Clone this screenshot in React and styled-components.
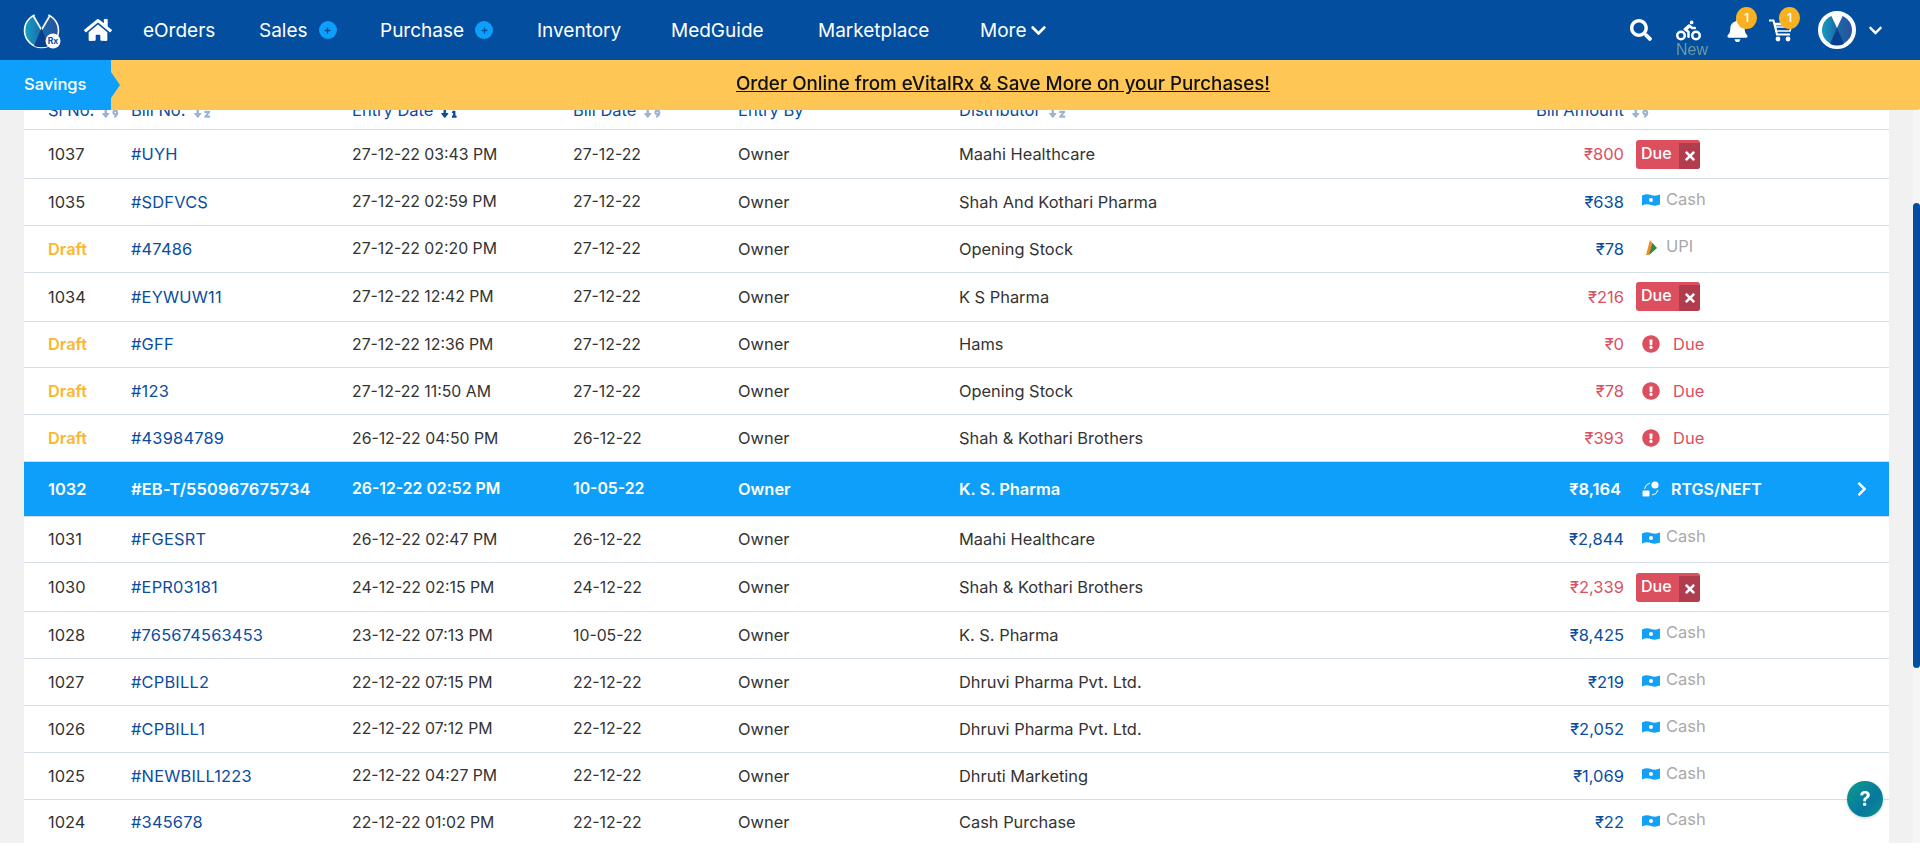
import React from 'react';
import styled, { createGlobalStyle, css } from 'styled-components';
import { FaHome, FaSearch, FaBiking, FaBell, FaChevronDown, FaChevronRight, FaTimes, FaExclamationCircle, FaSortNumericDown, FaSortNumericDownAlt, FaSortAlphaDown, FaPlus } from 'react-icons/fa';

const NAVY = '#044ea0';
const SKY = '#0d9ffa';
const RED = '#dc4f5f';
const LINK = '#0a4d9f';

const Global = createGlobalStyle`
  html, body { margin: 0; padding: 0; background: #fff; overflow: hidden; }
  body { font-family: Inter, "Liberation Sans", sans-serif; color: #333; }
  * { box-sizing: border-box; }
`;

const TopFixed = styled.header`
  position: fixed;
  top: 0;
  left: 0;
  right: 0;
  z-index: 5;
`;

const NavBar = styled.nav`
  height: 60px;
  background: ${NAVY};
  display: flex;
  align-items: center;
  padding-left: 23px;
  color: #fff;
`;

const LogoBox = styled.div`
  width: 61px;
  height: 37px;
  flex: none;
`;

const HomeLink = styled.div`
  width: 59px;
  display: flex;
  font-size: 28px;
  flex: none;
`;

const Menu = styled.div`
  display: grid;
  grid-template-columns: 116px 121px 157px 134px 147px 162px auto;
  align-items: center;
  font-size: 19px;
`;

const MenuItem = styled.span`
  display: flex;
  align-items: center;
  white-space: nowrap;
`;

const PlusBadge = styled.span`
  width: 18px;
  height: 18px;
  border-radius: 50%;
  background: ${SKY};
  color: ${NAVY};
  display: inline-flex;
  align-items: center;
  justify-content: center;
  font-size: 7px;
  margin-left: 11px;
`;

const MoreChevron = styled(FaChevronDown)`
  font-size: 17px;
  margin-left: 4px;
`;

const NavRight = styled.div`
  margin-left: auto;
  display: grid;
  grid-template-columns: 46px 50px 43px 49px 50px 52px;
  align-items: center;
  height: 60px;
`;

const IconSlot = styled.div`
  position: relative;
  display: flex;
  align-items: center;
  font-size: ${p => p.$size || 22}px;
`;

const NewLabel = styled.span`
  position: absolute;
  left: 0;
  top: 23px;
  font-size: 16px;
  line-height: 18px;
  color: #6f9a9a;
  font-family: "Liberation Sans", sans-serif;
`;

const CountBadge = styled.span`
  position: absolute;
  left: 10px;
  top: -12px;
  width: 21px;
  height: 22px;
  border-radius: 50%;
  background: #f9b021;
  color: #fff;
  font-size: 12px;
  font-weight: 600;
  display: flex;
  align-items: center;
  justify-content: center;
`;

const Banner = styled.div`
  height: 50px;
  background: #fec655;
  display: flex;
  align-items: center;
  border-bottom-right-radius: 3px;
`;

const SavingsTab = styled.div`
  width: 120px;
  height: 50px;
  flex: none;
  background: ${SKY};
  color: #fff;
  font-size: 16.5px;
  font-weight: 500;
  display: flex;
  align-items: center;
  padding: 0 0 2px 24px;
  clip-path: polygon(0 0, 111px 0, 111px 12px, 120px 25px, 111px 38px, 111px 50px, 0 50px);
`;

const BannerLink = styled.a`
  flex: 1;
  text-align: center;
  padding: 0 34px 3px 0;
  font-size: 18.8px;
  font-weight: 500;
  color: #111;
  text-decoration: underline;
`;

const Main = styled.main`
  height: 843px;
  background: #f1f1f1;
  padding: 90px 31px 0 24px;
  overflow: hidden;
`;

const Card = styled.section`
  background: #fff;
`;

const gridCols = css`
  display: grid;
  grid-template-columns: 83px 221px 221px 165px 221px 481px 184px 1fr;
  padding-left: 24px;
  align-items: center;
  border-bottom: 1px solid #d3deea;
`;

const HeadRow = styled.div`
  ${gridCols}
  height: 40px;
  font-size: 16.5px;
  color: ${LINK};
`;

const HeadCell = styled.div`
  display: flex;
  align-items: center;
  gap: 7px;
  white-space: nowrap;
  ${p => p.$amount && css`
    justify-content: flex-end;
    margin-right: -26px;
  `}
`;

const SortMark = styled.span`
  display: inline-flex;
  font-size: 19px;
  color: ${p => (p.$active ? LINK : '#9db4d0')};
`;

const Row = styled.div`
  ${gridCols}
  height: ${p => (p.$sel ? 54.6 : p.$button ? 49 : 46.8)}px;
  font-size: 16.4px;
  color: ${p => (p.$sel ? '#fff' : '#333')};
  background: ${p => (p.$sel ? SKY : 'transparent')};
  font-weight: ${p => (p.$sel ? 600 : 400)};
`;

const Serial = styled.div`
  ${p => p.$draft && css`
    color: #fdb62f;
    font-weight: 600;
  `}
`;

const BillNo = styled.div`
  color: ${p => (p.$sel ? '#fff' : LINK)};
  white-space: nowrap;
  letter-spacing: 0.2px;
`;

const Plain = styled.div`
  white-space: nowrap;
`;

const Stamp = styled.div`
  white-space: nowrap;
  font-size: 15.8px;
`;

const Amount = styled.div`
  text-align: right;
  font-size: 16.5px;
  color: ${p => (p.$sel ? '#fff' : p.$due ? RED : LINK)};
  padding-right: ${p => (p.$sel ? 3 : 0)}px;
`;

const StatusCell = styled.div`
  padding-left: 12px;
  display: flex;
  align-items: center;
`;

const DueButton = styled.div`
  width: 64px;
  height: 29px;
  border-radius: 3px;
  background: ${RED};
  color: #fff;
  display: flex;
  font-size: 16px;
  font-weight: 500;
  overflow: hidden;
`;

const DueText = styled.span`
  width: 43px;
  padding-left: 5px;
  line-height: 26px;
`;

const DueClose = styled.span`
  width: 21px;
  margin-top: 3px;
  background: #b13c4d;
  display: flex;
  align-items: center;
  justify-content: center;
  font-size: 14px;
`;

const PayMethod = styled.div`
  display: flex;
  align-items: center;
  padding: 0 0 6px 6px;
  color: #a9a9a9;
  font-size: 16.5px;
  gap: 6px;
`;

const PayIcon = styled.span`
  display: flex;
  width: 18px;
  justify-content: center;
  padding-top: 3px;
`;

const DueFlag = styled.div`
  display: flex;
  align-items: center;
  padding-left: 6px;
  gap: 13px;
  color: ${RED};
  font-size: 16.5px;
  svg { font-size: 18px; }
`;

const RtgsMethod = styled.div`
  flex: 1;
  display: flex;
  align-items: center;
  padding: 0 19px 0 6px;
  color: #fff;
  font-size: 16px;
  font-weight: 600;
  gap: 11px;
`;

const RowChevron = styled(FaChevronRight)`
  margin-left: auto;
  font-size: 16px;
`;

const Track = styled.div`
  position: fixed;
  top: 110px;
  right: 0;
  width: 7px;
  height: 733px;
  background: #f6f6f6;
`;

const Thumb = styled.div`
  position: absolute;
  top: 93px;
  left: 0;
  width: 7px;
  height: 465px;
  border-radius: 4px;
  background: ${NAVY};
`;

const HelpButton = styled.button`
  position: fixed;
  left: 1847px;
  top: 781px;
  width: 36px;
  height: 36px;
  border: none;
  border-radius: 50%;
  padding: 0;
  background: linear-gradient(135deg, #0a9c8c, #07789f 60%, #0a9488);
  color: #fff;
  font-family: Inter, sans-serif;
  font-size: 20px;
  font-weight: 700;
  box-shadow: 0 1px 3px rgba(0, 0, 0, 0.2);
  z-index: 6;
`;

const Logo = () => (
  <svg width="38" height="37" viewBox="0 0 38 37">
    <defs>
      <linearGradient id="lg" x1="0" x2="1" y1="0" y2="0">
        <stop offset="0" stopColor="#14a3c4" />
        <stop offset="0.5" stopColor="#1b6aa8" />
        <stop offset="1" stopColor="#2a4f9e" />
      </linearGradient>
    </defs>
    <circle cx="18.5" cy="18.5" r="17" fill="url(#lg)" stroke="#fff" strokeWidth="1.6" />
    <path d="M10 0 L18.5 15 L27 0 Z" fill={NAVY} />
    <path d="M10 3.5 L18.5 18 L27 3.5" fill="none" stroke="#fff" strokeWidth="1.6" />
    <path d="M18.5 16 L26 34 Q18.5 36.5 11 34 Z" fill="#07408f" />
    <circle cx="30" cy="29" r="7.5" fill="#fff" />
    <text x="30" y="32" textAnchor="middle" fontSize="8.5" fontWeight="700" fill={NAVY} fontFamily="Inter, sans-serif">Rx</text>
  </svg>
);

const Avatar = () => (
  <svg width="38" height="38" viewBox="0 0 38 38">
    <defs>
      <linearGradient id="av" x1="0" x2="1" y1="0" y2="0">
        <stop offset="0" stopColor="#14a3c4" />
        <stop offset="0.5" stopColor="#1b6aa8" />
        <stop offset="1" stopColor="#2a4f9e" />
      </linearGradient>
    </defs>
    <circle cx="19" cy="19" r="17" fill="url(#av)" stroke="#fff" strokeWidth="4" />
    <path d="M12 2 L19 17 L26 2 Z" fill="#fff" />
    <path d="M19 17 L26 33 Q19 36 12 33 Z" fill="#07408f" />
  </svg>
);

const CartIcon = () => (
  <svg width="24" height="23" viewBox="0 0 24 23" fill="none">
    <path d="M0 1.5 H4.5 L8 15.5 H21" stroke="#fff" strokeWidth="2" />
    <path d="M5.5 4.5 H23 L21 12 H7.2 Z M6.2 8 H22" stroke="#fff" strokeWidth="1.6" />
    <path d="M5.8 4.5 H23 L22.4 6.6 H6.4 Z" fill="#fff" />
    <circle cx="9" cy="20" r="2.4" fill="#fff" />
    <circle cx="19" cy="20" r="2.4" fill="#fff" />
  </svg>
);

const CashIcon = () => (
  <svg width="18" height="12" viewBox="0 0 18 12">
    <path d="M0 1.5 Q4.5 -0.5 9 1 T18 0.5 V10.5 Q13.5 12.5 9 11 T0 11.5 Z" fill="#14a0f5" />
    <circle cx="9" cy="6" r="2" fill="#fff" />
  </svg>
);

const UpiIcon = () => (
  <svg width="12" height="15" viewBox="0 0 12 15">
    <path d="M1 15 L5 0 L11 8 L3.5 15 Z" fill="#ef8a2a" />
    <path d="M4 15 L7.5 3 L12 8 Z" fill="#2d8a3f" />
  </svg>
);

const RtgsIcon = () => (
  <svg width="18" height="16" viewBox="0 0 18 16" fill="#fff">
    <rect x="0.5" y="9.5" width="7" height="6" rx="1.2" />
    <circle cx="13" cy="4" r="3.6" />
    <path d="M2.5 8 Q3.5 3 8 2" fill="none" stroke="#fff" strokeWidth="1" />
    <path d="M10 14 Q15 13.5 16 9" fill="none" stroke="#fff" strokeWidth="1" />
  </svg>
);

const rows = [
  { sl: '1037', bill: '#UYH', entry: '27-12-22 03:43 PM', date: '27-12-22', dist: 'Maahi Healthcare', amt: '800', st: 'button' },
  { sl: '1035', bill: '#SDFVCS', entry: '27-12-22 02:59 PM', date: '27-12-22', dist: 'Shah And Kothari Pharma', amt: '638', st: 'cash' },
  { sl: 'Draft', bill: '#47486', entry: '27-12-22 02:20 PM', date: '27-12-22', dist: 'Opening Stock', amt: '78', st: 'upi' },
  { sl: '1034', bill: '#EYWUW11', entry: '27-12-22 12:42 PM', date: '27-12-22', dist: 'K S Pharma', amt: '216', st: 'button' },
  { sl: 'Draft', bill: '#GFF', entry: '27-12-22 12:36 PM', date: '27-12-22', dist: 'Hams', amt: '0', st: 'due' },
  { sl: 'Draft', bill: '#123', entry: '27-12-22 11:50 AM', date: '27-12-22', dist: 'Opening Stock', amt: '78', st: 'due' },
  { sl: 'Draft', bill: '#43984789', entry: '26-12-22 04:50 PM', date: '26-12-22', dist: 'Shah & Kothari Brothers', amt: '393', st: 'due' },
  { sl: '1032', bill: '#EB-T/550967675734', entry: '26-12-22 02:52 PM', date: '10-05-22', dist: 'K. S. Pharma', amt: '8,164', st: 'rtgs' },
  { sl: '1031', bill: '#FGESRT', entry: '26-12-22 02:47 PM', date: '26-12-22', dist: 'Maahi Healthcare', amt: '2,844', st: 'cash' },
  { sl: '1030', bill: '#EPR03181', entry: '24-12-22 02:15 PM', date: '24-12-22', dist: 'Shah & Kothari Brothers', amt: '2,339', st: 'button' },
  { sl: '1028', bill: '#765674563453', entry: '23-12-22 07:13 PM', date: '10-05-22', dist: 'K. S. Pharma', amt: '8,425', st: 'cash' },
  { sl: '1027', bill: '#CPBILL2', entry: '22-12-22 07:15 PM', date: '22-12-22', dist: 'Dhruvi Pharma Pvt. Ltd.', amt: '219', st: 'cash' },
  { sl: '1026', bill: '#CPBILL1', entry: '22-12-22 07:12 PM', date: '22-12-22', dist: 'Dhruvi Pharma Pvt. Ltd.', amt: '2,052', st: 'cash' },
  { sl: '1025', bill: '#NEWBILL1223', entry: '22-12-22 04:27 PM', date: '22-12-22', dist: 'Dhruti Marketing', amt: '1,069', st: 'cash' },
  { sl: '1024', bill: '#345678', entry: '22-12-22 01:02 PM', date: '22-12-22', dist: 'Cash Purchase', amt: '22', st: 'cash' },
];

const Status = ({ st }) => {
  if (st === 'button') {
    return (
      <DueButton>
        <DueText>Due</DueText>
        <DueClose><FaTimes /></DueClose>
      </DueButton>
    );
  }
  if (st === 'due') {
    return <DueFlag><FaExclamationCircle />Due</DueFlag>;
  }
  if (st === 'rtgs') {
    return <RtgsMethod><RtgsIcon />RTGS/NEFT<RowChevron /></RtgsMethod>;
  }
  return (
    <PayMethod>
      <PayIcon>{st === 'cash' ? <CashIcon /> : <UpiIcon />}</PayIcon>
      {st === 'cash' ? 'Cash' : 'UPI'}
    </PayMethod>
  );
};

export default function App() {
  return (
    <>
      <Global />
      <TopFixed>
        <NavBar>
          <LogoBox><Logo /></LogoBox>
          <HomeLink><FaHome /></HomeLink>
          <Menu>
            <MenuItem>eOrders</MenuItem>
            <MenuItem>Sales<PlusBadge><FaPlus /></PlusBadge></MenuItem>
            <MenuItem>Purchase<PlusBadge><FaPlus /></PlusBadge></MenuItem>
            <MenuItem>Inventory</MenuItem>
            <MenuItem>MedGuide</MenuItem>
            <MenuItem>Marketplace</MenuItem>
            <MenuItem>More<MoreChevron /></MenuItem>
          </Menu>
          <NavRight>
            <IconSlot><FaSearch /></IconSlot>
            <IconSlot $size={25}><FaBiking /><NewLabel>New</NewLabel></IconSlot>
            <IconSlot $size={23}><FaBell /><CountBadge>1</CountBadge></IconSlot>
            <IconSlot><CartIcon /><CountBadge>1</CountBadge></IconSlot>
            <IconSlot><Avatar /></IconSlot>
            <IconSlot $size={15}><FaChevronDown /></IconSlot>
          </NavRight>
        </NavBar>
        <Banner>
          <SavingsTab>Savings</SavingsTab>
          <BannerLink>Order Online from eVitalRx &amp; Save More on your Purchases!</BannerLink>
        </Banner>
      </TopFixed>
      <Main>
        <Card>
          <HeadRow>
            <HeadCell>Sl No.<SortMark><FaSortNumericDown /></SortMark></HeadCell>
            <HeadCell>Bill No.<SortMark><FaSortAlphaDown /></SortMark></HeadCell>
            <HeadCell>Entry Date<SortMark $active><FaSortNumericDownAlt /></SortMark></HeadCell>
            <HeadCell>Bill Date<SortMark><FaSortNumericDown /></SortMark></HeadCell>
            <HeadCell>Entry By</HeadCell>
            <HeadCell>Distributor<SortMark><FaSortAlphaDown /></SortMark></HeadCell>
            <HeadCell $amount>Bill Amount<SortMark><FaSortNumericDown /></SortMark></HeadCell>
            <div />
          </HeadRow>
          {rows.map(r => {
            const sel = r.st === 'rtgs';
            const isDue = r.st === 'button' || r.st === 'due';
            return (
              <Row key={r.bill} $sel={sel} $button={r.st === 'button'}>
                <Serial $draft={r.sl === 'Draft'}>{r.sl}</Serial>
                <BillNo $sel={sel}>{r.bill}</BillNo>
                <Stamp>{r.entry}</Stamp>
                <Stamp>{r.date}</Stamp>
                <Plain>Owner</Plain>
                <Plain>{r.dist}</Plain>
                <Amount $sel={sel} $due={isDue}>₹{r.amt}</Amount>
                <StatusCell><Status st={r.st} /></StatusCell>
              </Row>
            );
          })}
        </Card>
      </Main>
      <Track><Thumb /></Track>
      <HelpButton>?</HelpButton>
    </>
  );
}
